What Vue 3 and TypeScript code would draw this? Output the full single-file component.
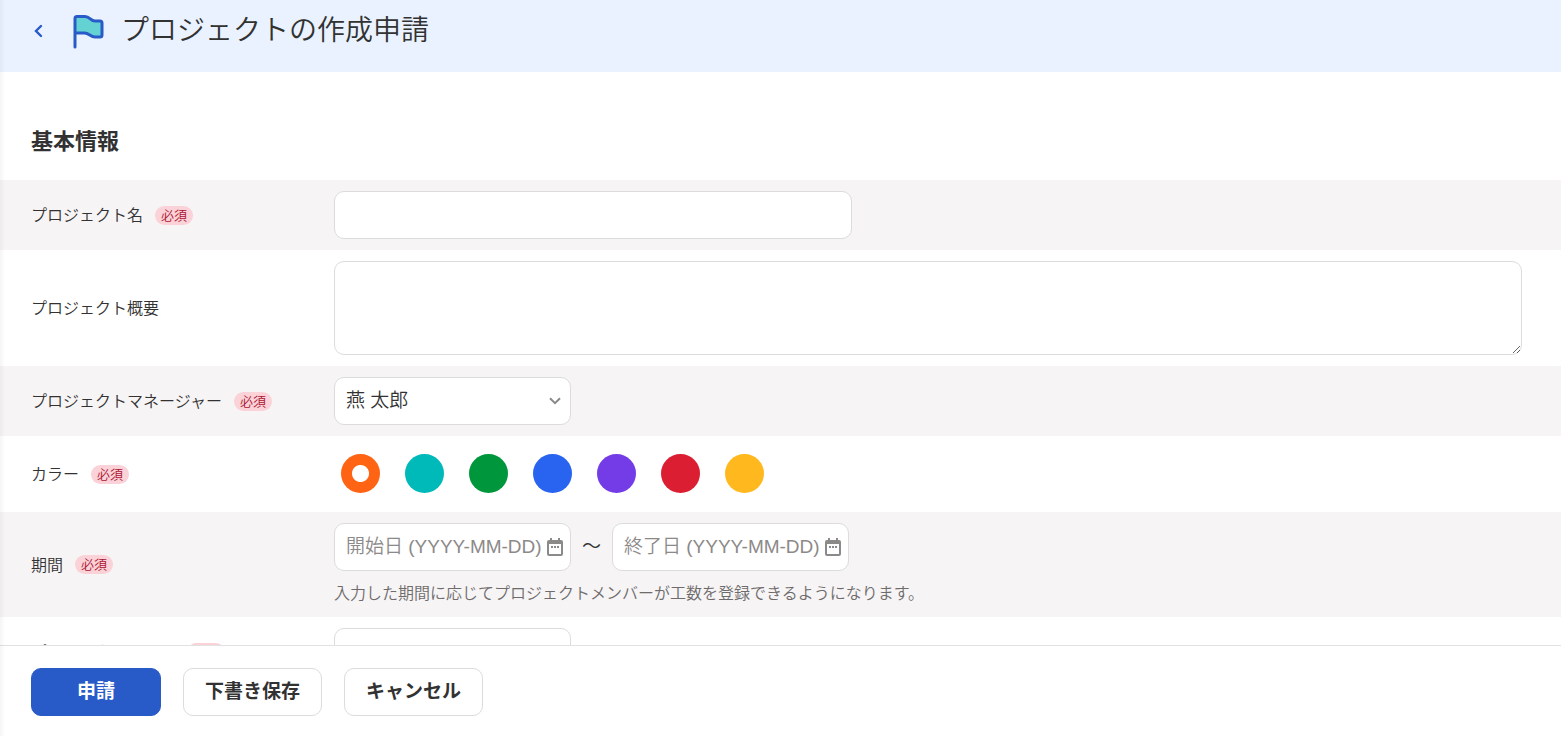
<script setup lang="ts">
import { ref } from 'vue'

interface ColorOption {
  id: string
  label: string
}

const colors: ColorOption[] = [
  { id: 'orange', label: 'オレンジ' },
  { id: 'teal', label: 'ティール' },
  { id: 'green', label: 'グリーン' },
  { id: 'blue', label: 'ブルー' },
  { id: 'purple', label: 'パープル' },
  { id: 'red', label: 'レッド' },
  { id: 'yellow', label: 'イエロー' },
]

const name = ref('')
const summary = ref('')
const manager = ref('燕 太郎')
const color = ref('orange')
const startDate = ref('')
const endDate = ref('')
const code = ref('')
</script>

<template>
  <div class="page">
    <form id="project-form" class="scroll" @submit.prevent>
      <header class="header">
        <a class="back" href="#" aria-label="戻る">
          <svg width="9" height="14" viewBox="0 0 9 14" aria-hidden="true">
            <path
              d="M7 2 2 7l5 5"
              fill="none"
              stroke="currentColor"
              stroke-width="2.4"
              stroke-linecap="round"
            />
          </svg>
        </a>
        <svg class="flag" width="32" height="36" viewBox="0 0 32 36" aria-hidden="true">
          <path
            d="M2 5.500Q2 3.500 4 3.500H12C17 3.500 17.500 8 22 8H27Q29 8 29 10V22Q29 24 27 24H22C17.500 24 16 20 11.500 20H2Z"
            fill="#64d2d2"
          />
          <path
            d="M2 34V5.500Q2 3.500 4 3.500H12C17 3.500 17.500 8 22 8H27Q29 8 29 10V22Q29 24 27 24H22C17.500 24 16 20 11.500 20H2"
            fill="none"
            stroke="#285ac8"
            stroke-width="3"
            stroke-linecap="round"
            stroke-linejoin="round"
          />
        </svg>
        <h1>プロジェクトの作成申請</h1>
      </header>

      <h2>基本情報</h2>

      <div class="row">
        <div class="label"><label class="caption" for="name">プロジェクト名</label><span class="badge">必須</span></div>
        <div class="field"><input id="name" v-model="name" class="box wide" type="text" /></div>
      </div>

      <div class="row">
        <div class="label"><label class="caption" for="summary">プロジェクト概要</label></div>
        <div class="field"><textarea id="summary" v-model="summary" class="box area"></textarea></div>
      </div>

      <div class="row">
        <div class="label"><label class="caption" for="manager">プロジェクトマネージャー</label><span class="badge">必須</span></div>
        <div class="field">
          <div class="combo">
            <select id="manager" v-model="manager" class="box">
              <option>燕 太郎</option>
            </select>
            <svg class="chevron" width="12" height="8" viewBox="0 0 12 8" aria-hidden="true">
              <path d="M1 1.200 6 6.200l5-5" fill="none" stroke="#8c8989" stroke-width="2" />
            </svg>
          </div>
        </div>
      </div>

      <div class="row">
        <div class="label"><span id="color-label" class="caption">カラー</span><span class="badge">必須</span></div>
        <div class="field swatches" role="radiogroup" aria-labelledby="color-label">
          <input
            v-for="c in colors"
            :key="c.id"
            v-model="color"
            type="radio"
            name="color"
            :value="c.id"
            :aria-label="c.label"
            :class="['swatch', c.id]"
          />
        </div>
      </div>

      <div class="row">
        <div class="label"><label class="caption" for="start">期間</label><span class="badge">必須</span></div>
        <div class="field">
          <div class="period">
            <div class="box date">
              <input id="start" v-model="startDate" type="text" placeholder="開始日 (YYYY-MM-DD)" />
              <button type="button" aria-label="開始日を選択">
                <svg width="16" height="18" viewBox="0 0 16 18" aria-hidden="true">
                  <path
                    d="M2 2H3V0H5V2H11V0H13V2H14Q16 2 16 4V16Q16 18 14 18H2Q0 18 0 16V4Q0 2 2 2ZM2 6V16H14V6ZM4 8H6V10H4ZM7 8H9V10H7ZM10 8H12V10H10Z"
                    fill="currentColor"
                    fill-rule="evenodd"
                  />
                </svg>
              </button>
            </div>
            <span class="tilde">～</span>
            <div class="box date">
              <input v-model="endDate" type="text" aria-label="終了日" placeholder="終了日 (YYYY-MM-DD)" />
              <button type="button" aria-label="終了日を選択">
                <svg width="16" height="18" viewBox="0 0 16 18" aria-hidden="true">
                  <path
                    d="M2 2H3V0H5V2H11V0H13V2H14Q16 2 16 4V16Q16 18 14 18H2Q0 18 0 16V4Q0 2 2 2ZM2 6V16H14V6ZM4 8H6V10H4ZM7 8H9V10H7ZM10 8H12V10H10Z"
                    fill="currentColor"
                    fill-rule="evenodd"
                  />
                </svg>
              </button>
            </div>
          </div>
          <p class="hint">入力した期間に応じてプロジェクトメンバーが工数を登録できるようになります。</p>
        </div>
      </div>

      <div class="row">
        <div class="label"><label class="caption" for="code">プロジェクトコード</label><span class="badge">必須</span></div>
        <div class="field"><input id="code" v-model="code" class="box short" type="text" /></div>
      </div>
    </form>

    <footer class="footer">
      <button class="btn primary" type="submit" form="project-form">申請</button>
      <button class="btn" type="button">下書き保存</button>
      <button class="btn" type="button">キャンセル</button>
    </footer>
  </div>
</template>

<style>
body {
  margin: 0;
}
</style>

<style scoped>
* {
  box-sizing: border-box;
}

.page {
  position: relative;
  display: flex;
  flex-direction: column;
  height: 100vh;
  background: #fff;
  color: #323232;
  font-family: "Liberation Sans", "Noto Sans CJK JP", sans-serif;
  font-size: 16px;
  font-weight: 350;
  line-height: 24px;
}

.page::before {
  content: "";
  position: absolute;
  z-index: 1;
  inset: 0 auto 0 0;
  width: 5px;
  background: linear-gradient(to right, rgba(0, 0, 0, 0.04), rgba(0, 0, 0, 0));
  pointer-events: none;
}

.scroll {
  flex: 1;
  min-height: 0;
  overflow: hidden;
}

.header {
  display: flex;
  align-items: center;
  height: 72px;
  padding: 0 31px 10px;
  background: #eaf2ff;
}

.back {
  display: flex;
  width: 42px;
  padding-left: 3px;
  color: #285ac8;
}

.flag {
  margin-right: 16px;
}

h1 {
  margin: 0;
  font-size: 28px;
  font-weight: 350;
  line-height: 40px;
}

h2 {
  margin: 0;
  padding: 53px 31px 21px;
  font-size: 22px;
  font-weight: 700;
  line-height: 34px;
}

.row {
  display: flex;
  align-items: center;
  min-height: 70px;
  padding: 11px 39px 11px 31px;
}

.row:nth-of-type(odd) {
  background: #f6f4f5;
}

.label {
  display: flex;
  flex: 0 0 303px;
  align-items: center;
  gap: 12px;
}

.caption {
  padding-top: 2px;
}

.badge {
  padding: 0 6px;
  border-radius: 10px;
  background: #fad2d7;
  color: #aa1432;
  font-size: 13px;
  line-height: 19px;
}

.field {
  flex: 1;
  min-width: 0;
}

.box {
  display: block;
  height: 48px;
  margin: 0;
  padding: 0 11px;
  border: 1px solid #dcdcdc;
  border-radius: 10px;
  background: #fff;
  color: #323232;
  font: inherit;
  font-size: 19px;
}

.wide {
  width: 518px;
}

.short,
.combo {
  width: 237px;
}

.area {
  width: 100%;
  height: 94px;
  resize: both;
}

.combo {
  position: relative;
}

.combo select {
  width: 100%;
  appearance: none;
}

.chevron {
  position: absolute;
  top: 20px;
  right: 10px;
  pointer-events: none;
}

.swatches {
  display: flex;
  gap: 25px;
  padding: 7px 7px 8px;
}

.swatch {
  width: 39px;
  height: 39px;
  margin: 0;
  border-radius: 50%;
  appearance: none;
}

.swatch:checked {
  background-image: radial-gradient(circle, #fff 8px, transparent 9px);
}

.orange {
  background-color: #ff6414;
}

.teal {
  background-color: #00b9b9;
}

.green {
  background-color: #00963c;
}

.blue {
  background-color: #2864f0;
}

.purple {
  background-color: #733ce6;
}

.red {
  background-color: #dc1e32;
}

.yellow {
  background-color: #ffb91e;
}

.period {
  display: flex;
  align-items: center;
}

.date {
  display: flex;
  align-items: center;
  width: 237px;
  padding-right: 7px;
}

.date input {
  flex: 1;
  min-width: 0;
  padding: 0;
  border: 0;
  outline: 0;
  background: none;
  color: inherit;
  font: inherit;
}

.date input::placeholder {
  color: #8c8989;
}

.date button {
  display: flex;
  padding: 0;
  border: 0;
  background: none;
  color: #8c8989;
}

.tilde {
  width: 41px;
  font-size: 19px;
  text-align: center;
}

.hint {
  margin: 11px 0 0;
  color: #6e6b6b;
}

.footer {
  display: flex;
  gap: 22px;
  padding: 22px 31px 20px;
  border-top: 1px solid #e1e1e1;
  background: #fff;
}

.btn {
  min-width: 130px;
  height: 48px;
  padding: 0 21px;
  border: 1px solid #dcdcdc;
  border-radius: 10px;
  background: #fff;
  color: #323232;
  font: inherit;
  font-size: 19px;
  font-weight: 700;
}

.primary {
  border-color: #285ac8;
  background: #285ac8;
  color: #fff;
}
</style>
